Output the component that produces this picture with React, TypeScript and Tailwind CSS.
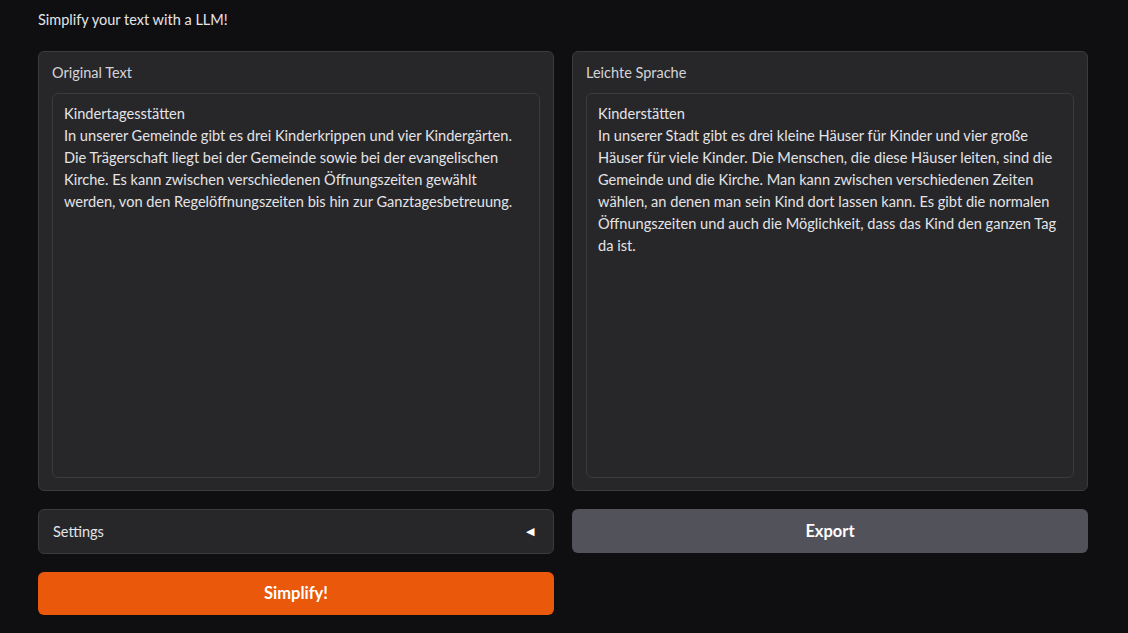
import { useState } from 'react';

const originalLines = [
  'Kindertagesstätten',
  'In unserer Gemeinde gibt es drei Kinderkrippen und vier Kindergärten.',
  'Die Trägerschaft liegt bei der Gemeinde sowie bei der evangelischen',
  'Kirche. Es kann zwischen verschiedenen Öffnungszeiten gewählt',
  'werden, von den Regelöffnungszeiten bis hin zur Ganztagesbetreuung.',
];

const simpleLines = [
  'Kinderstätten',
  'In unserer Stadt gibt es drei kleine Häuser für Kinder und vier große',
  'Häuser für viele Kinder. Die Menschen, die diese Häuser leiten, sind die',
  'Gemeinde und die Kirche. Man kann zwischen verschiedenen Zeiten',
  'wählen, an denen man sein Kind dort lassen kann. Es gibt die normalen',
  'Öffnungszeiten und auch die Möglichkeit, dass das Kind den ganzen Tag',
  'da ist.',
];

function TextBlock({ label, lines }: { label: string; lines: string[] }) {
  return (
    <div className="flex h-[440px] flex-col rounded-md border border-[#3a3a40] bg-[#27272a] px-[13px] pt-[11px] pb-[12px]">
      <div className="mb-[10px] text-[14.5px] leading-[20px] text-[#d4d4d8]">{label}</div>
      <div className="flex-1 rounded-md border border-[#3a3a40] bg-[#27272a] px-[11px] pt-[9px] text-[14.6px] leading-[22px] text-[#e4e4e7]">
        {lines.map((line, i) => (
          <div key={i} className="whitespace-nowrap">
            {line}
          </div>
        ))}
      </div>
    </div>
  );
}

export default function App() {
  const [open, setOpen] = useState(false);

  return (
    <div className="min-h-[633px] bg-[#0f0f11] pl-[38px] pr-[40px] pt-[10px] font-['Lato','Liberation_Sans',sans-serif]">
      <p className="text-[14.5px] leading-[20px] text-[#e4e4e7]">Simplify your text with a LLM!</p>

      <div className="mt-[21px] grid grid-cols-[516px_1fr] gap-x-[18px]">
        <div className="flex flex-col gap-[18px]">
          <TextBlock label="Original Text" lines={originalLines} />
          <button
            onClick={() => setOpen(!open)}
            className="flex h-[45px] items-center justify-between rounded-md border border-[#3a3a40] bg-[#27272a] pl-[14px] pr-[19px] text-[14.5px] text-[#e4e4e7]"
          >
            <span>Settings</span>
            <span className="text-[11px] text-white">{open ? '▼' : '◀'}</span>
          </button>
          <button className="h-[43px] rounded-md bg-[#ea580c] text-[16.5px] font-bold text-white">
            Simplify!
          </button>
        </div>

        <div className="flex flex-col gap-[18px]">
          <TextBlock label="Leichte Sprache" lines={simpleLines} />
          <button className="h-[44px] rounded-md bg-[#52525b] text-[16.5px] font-bold text-white">
            Export
          </button>
        </div>
      </div>
    </div>
  );
}
